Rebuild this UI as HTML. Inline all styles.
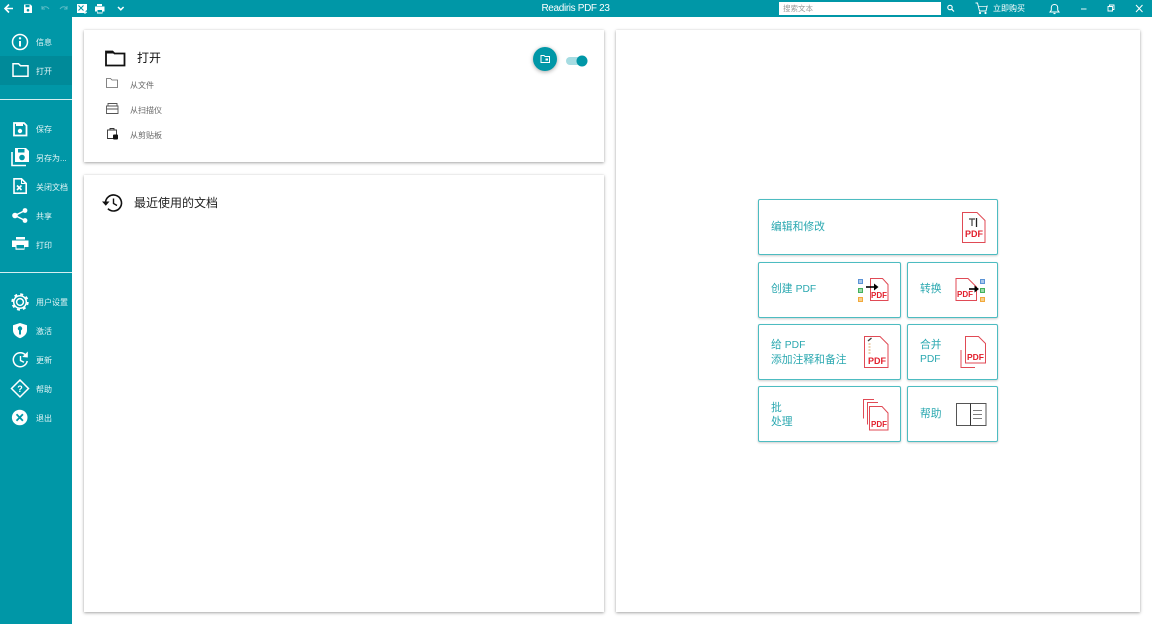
<!DOCTYPE html>
<html lang="zh">
<head>
<meta charset="utf-8">
<title>Readiris PDF 23</title>
<style>
html,body{margin:0;padding:0}
body{width:1152px;height:624px;overflow:hidden;background:#fff;position:relative;font-family:"Liberation Sans","Noto Sans CJK SC",sans-serif;color:#222}
.a{position:absolute}
.top{left:0;top:0;width:1152px;height:17px;background:#0097a7}
.side{left:0;top:17px;width:71.5px;height:607px;background:#0097a7}
.sel{left:0;top:56px;width:71.5px;height:29px;background:#008a99}
.hr{left:0;width:72px;height:1px;background:#d5eef0}
.sl{left:36px;font-size:8px;line-height:12px;color:#e4f5f6;white-space:nowrap}
.card{background:#fff;box-shadow:0 1px 3px rgba(0,0,0,.35),0 0 1px rgba(0,0,0,.1)}
.fl{left:130px;font-size:8px;line-height:12px;color:#666;white-space:nowrap}
.btn{background:#fff;border:1px solid #4dbcc1;border-radius:2px;box-shadow:0 1px 2px rgba(0,0,0,.2);box-sizing:border-box}
.bt{font-size:10.8px;line-height:14px;color:#2aa8b0;white-space:nowrap}
.bt span{font-size:10.3px}
.pdf{text-align:center;font-weight:bold;line-height:11px;color:#e21f2c}
svg{position:absolute;overflow:visible}
</style>
</head>
<body>
<div class="a top"></div>
<div class="a side"></div>
<div class="a sel"></div>
<div class="a hr" style="top:99px"></div>
<div class="a hr" style="top:272px"></div>

<!-- top toolbar icons -->
<svg style="left:0;top:0" width="130" height="17" fill="none">
<path d="M13 8.500H5.500M9 4.500L5 8.500l4 4" stroke="#fff" stroke-width="1.600"/>
<path d="M24 4.500h6.500l1.500 1.500v7h-8z" fill="#fff"/><rect x="25.500" y="5" width="4" height="2.200" fill="#0097a7"/><circle cx="28" cy="10.200" r="1.300" fill="#0097a7"/>
<path d="M42 9c1.500-3 5-3 7 0M42 6v3h3" stroke="#5cbcc6" stroke-width="1"/>
<path d="M67 9c-1.500-3-5-3-7 0M67 6v3h-3" stroke="#5cbcc6" stroke-width="1"/>
<path d="M77 4h10v6l-2 1.500v1.500h-8z" fill="#fff"/><path d="M78.500 5.500l5 5M83.500 5.500l-5 5" stroke="#0097a7" stroke-width="1"/><path d="M85 10.500v3.500M83.500 12.300h3.500" stroke="#fff" stroke-width="1"/>
<path d="M97 4h5v2h-5z" fill="#fff"/><path d="M95 6.500h9.500v5h-2v2h-5.500v-2h-2z" fill="#fff"/><rect x="97.500" y="10" width="4.500" height="2.500" fill="#0097a7"/>
<path d="M118 7l2.800 2.800L123.600 7" stroke="#fff" stroke-width="1.500"/>
</svg>
<div class="a" style="left:485.500px;top:2px;width:180px;text-align:center;font-size:10px;letter-spacing:-.35px;line-height:13px;color:#fff">Readiris PDF 23</div>
<div class="a" style="left:779px;top:2px;width:162px;height:13px;background:#fff;font-size:7.500px;line-height:14px;color:#999;text-indent:4px">搜索文本</div>
<svg style="left:945px;top:0" width="207" height="17" fill="none">
<circle cx="5" cy="7.500" r="2.200" stroke="#fff" stroke-width="1.100"/><path d="M6.800 9.300l2.200 2.200" stroke="#fff" stroke-width="1.200"/>
<path d="M30.500 3h2l2 8h6.500l1.300-5.500" stroke="#fff" stroke-width=".9"/><path d="M33.500 6.500h8.500" stroke="#fff" stroke-width=".7"/><circle cx="35" cy="13" r="1.100" fill="#fff"/><circle cx="40.500" cy="13" r="1.100" fill="#fff"/>
<path d="M105 12h9l-1.300-1.800V7.500c0-4-6.400-4-6.400 0v2.700z" stroke="#fff" stroke-width="1"/><path d="M108.500 13.500h2" stroke="#fff" stroke-width="1.200"/>
<path d="M136 9h5.500" stroke="#e8f7f8" stroke-width="1"/>
<path d="M163 6.500h4.500v4.500H163zM164.500 6.500V5h4.500v4.500h-1.500" stroke="#fff" stroke-width=".9"/>
<path d="M191 5l6.500 7M197.500 5l-6.500 7" stroke="#fff" stroke-width="1"/>
</svg>
<div class="a" style="left:993px;top:3px;font-size:8px;line-height:12px;color:#fff">立即购买</div>

<!-- sidebar icons -->
<svg style="left:0;top:17px" width="72" height="420" fill="none">
<circle cx="20" cy="25" r="7.500" stroke="#fff" stroke-width="1.500"/><rect x="19" y="24" width="2" height="5.500" fill="#fff"/><circle cx="20" cy="21.300" r="1.200" fill="#fff"/>
<path d="M13 46.700h5.500l2 2h7.500v10.500H13z" stroke="#fff" stroke-width="1.500"/>
<path d="M14 106h10l2.500 2.500v10H14z" stroke="#fff" stroke-width="1.800"/><rect x="16" y="105.500" width="7" height="3.500" fill="#fff"/><circle cx="20" cy="114" r="2.200" fill="#fff"/>
<path d="M15 131h11l3 3v11H15z" fill="#fff"/><rect x="18" y="132" width="6.500" height="3.500" fill="#0097a7"/><circle cx="22" cy="140.500" r="2.800" fill="#0097a7"/><path d="M12 135v13.500h14" stroke="#fff" stroke-width="1.600"/>
<path d="M14 161.800h7.500l4.700 4.700v9.700H14z" stroke="#fff" stroke-width="1.600"/><path d="M21.500 161.800v4.700h4.700" stroke="#fff" stroke-width="1"/><path d="M17 168.500l4.500 4.500M21.500 168.500L17 173" stroke="#fff" stroke-width="1.600"/>
<path d="M25 193.500l-10 5 10 5" stroke="#fff" stroke-width="1.500"/><circle cx="25" cy="193.500" r="2.400" fill="#fff"/><circle cx="25" cy="203.500" r="2.400" fill="#fff"/><circle cx="15" cy="198.500" r="2.800" fill="#fff"/>
<rect x="16" y="220" width="9" height="2.500" fill="#fff"/><path d="M12 223.500h16.500v6.500h-4v2.700h-9V230H12z" fill="#fff"/><rect x="16.500" y="228" width="7.500" height="3.500" fill="#0097a7"/>
<circle cx="20" cy="285" r="3.400" stroke="#fff" stroke-width="1.500"/><circle cx="20" cy="285" r="6.300" stroke="#fff" stroke-width="1.500"/><circle cx="20" cy="285" r="7.800" stroke="#fff" stroke-width="1.800" stroke-dasharray="3 3.120"/>
<path d="M20 306l7 2.300v5c0 3.800-3 6.500-7 7.900-4-1.400-7-4.100-7-7.900v-5z" fill="#fff"/><circle cx="20" cy="311.500" r="2.200" fill="#0097a7"/><rect x="19" y="312" width="2" height="5.500" fill="#0097a7"/>
<path d="M25.500 338A7 7 0 1 0 27.200 344" stroke="#fff" stroke-width="1.500"/><path d="M27.800 334.500v6l-5.600-.5z" fill="#fff"/><path d="M20.500 339v4.500l3.500 1.700" stroke="#fff" stroke-width="1.400"/>
<path d="M20 363l8.500 8.500-8.500 8.500-8.500-8.500z" stroke="#fff" stroke-width="1.500"/>
<circle cx="19.700" cy="400.500" r="7.800" fill="#fff"/><path d="M16.500 397.300l6.400 6.400M22.900 397.300l-6.400 6.400" stroke="#0097a7" stroke-width="1.800"/>
</svg>
<div class="a" style="left:14px;top:382px;width:12px;text-align:center;font-size:9px;line-height:14px;font-weight:bold;color:#fff">?</div>
<div class="a sl" style="top:37px">信息</div>
<div class="a sl" style="top:66px">打开</div>
<div class="a sl" style="top:124px">保存</div>
<div class="a sl" style="top:153px">另存为...</div>
<div class="a sl" style="top:182px">关闭文档</div>
<div class="a sl" style="top:211px">共享</div>
<div class="a sl" style="top:240px">打印</div>
<div class="a sl" style="top:297px">用户设置</div>
<div class="a sl" style="top:326px">激活</div>
<div class="a sl" style="top:355px">更新</div>
<div class="a sl" style="top:384px">帮助</div>
<div class="a sl" style="top:413px">退出</div>

<!-- cards -->
<div class="a card" style="left:84px;top:30px;width:520px;height:132px"></div>
<div class="a card" style="left:84px;top:175px;width:520px;height:437px"></div>
<div class="a card" style="left:616px;top:30px;width:524px;height:582px"></div>

<svg style="left:100px;top:45px" width="70" height="180" fill="none">
<path d="M6 6.500h6.500l2 2h10v12H6z" stroke="#111" stroke-width="1.800"/><path d="M6 6.500h6.500l2 2H6z" fill="#111"/>
<path d="M6.500 33.500h4l1.500 1.500h5.500v7.500H6.500z" stroke="#666" stroke-width=".8"/>
<path d="M6.500 61h11.500v7.500H6.500zM6.500 64h11.500M8 61v-2.500h9V61" stroke="#555" stroke-width=".9"/>
<path d="M7.500 85h9v8.500h-9zM10 85v-1.500h4V85" stroke="#333" stroke-width=".9"/><rect x="13" y="89.500" width="5" height="5" rx="1" fill="#111"/>
<path d="M5.500 158a8 8 0 1 1 2.400 5.700" stroke="#111" stroke-width="1.600"/><path d="M2 156.500h7.500l-3.700 4.300z" fill="#111"/><path d="M13.500 153.500v5l3.500 2" stroke="#111" stroke-width="1.400"/>
</svg>
<div class="a" style="left:137px;top:51px;font-size:12px;line-height:15px;color:#111">打开</div>
<div class="a fl" style="top:80px">从文件</div>
<div class="a fl" style="top:105px">从扫描仪</div>
<div class="a fl" style="top:130px">从剪贴板</div>
<div class="a" style="left:134px;top:196px;font-size:12px;line-height:15px;color:#222">最近使用的文档</div>

<!-- open button + toggle -->
<div class="a" style="left:533px;top:47px;width:24px;height:24px;border-radius:50%;background:#0097a7;box-shadow:0 1px 4px rgba(0,0,0,.35)"></div>
<svg style="left:533px;top:47px" width="60" height="24" fill="none">
<path d="M8 8.500h3l1 1h4.500v6H8z" stroke="#fff" stroke-width="1"/><rect x="12.500" y="11.500" width="2.500" height="2" fill="#fff"/>
<rect x="33" y="10" width="18" height="8" rx="4" fill="#a6dce2"/><circle cx="49" cy="14" r="5.500" fill="#0097a7"/>
</svg>

<!-- buttons -->
<div class="a btn" style="left:758px;top:199px;width:240px;height:56px"></div>
<div class="a btn" style="left:758px;top:262px;width:143px;height:56px"></div>
<div class="a btn" style="left:907px;top:262px;width:91px;height:56px"></div>
<div class="a btn" style="left:758px;top:324px;width:143px;height:56px"></div>
<div class="a btn" style="left:907px;top:324px;width:91px;height:56px"></div>
<div class="a btn" style="left:758px;top:386px;width:143px;height:56px"></div>
<div class="a btn" style="left:907px;top:386px;width:91px;height:56px"></div>
<div class="a bt" style="left:771px;top:220px">编辑和修改</div>
<div class="a bt" style="left:771px;top:282px">创建 <span>PDF</span></div>
<div class="a bt" style="left:920px;top:282px">转换</div>
<div class="a bt" style="left:771px;top:338px">给 <span>PDF</span><br>添加注释和备注</div>
<div class="a bt" style="left:920px;top:338px">合并<br><span>PDF</span></div>
<div class="a bt" style="left:771px;top:401px">批<br>处理</div>
<div class="a bt" style="left:920px;top:407px">帮助</div>

<svg style="left:0;top:0" width="1152" height="624" fill="none">
<g stroke="#e04a55" stroke-width="1">
<path d="M962.500 212.500h14.500l8 8v22h-22.500z"/>
<path d="M870.500 278.500h12l5.500 6v16h-17.500z"/>
<path d="M956 278.500h12l8.500 8.500v13.500H956z"/>
<path d="M864.500 336.500h15.500l8 8v23h-23.500z"/>
<path d="M965.500 336.500h13l7 7v19.500h-20zM961 350v17.500h14"/>
<path d="M874 399.500h-10.500v19M878 402.500h-10.500v22M869.500 406.500h12.500l6 6.500v17h-18.500z"/>
</g>
</svg>
<svg style="left:0;top:0" width="1152" height="624" fill="none">
<path d="M969 219h6M972 219v7" stroke="#444" stroke-width="1.200"/><path d="M976.500 218v9" stroke="#222" stroke-width="1.300"/>
<rect x="858.500" y="279.500" width="4" height="4" fill="#a9c8ec" stroke="#5b93d6"/><rect x="858.500" y="288.500" width="4" height="4" fill="#9bdcaa" stroke="#43b05c"/><rect x="858.500" y="297.500" width="4" height="4" fill="#f8d08d" stroke="#f2a93b"/>
<path d="M866 287h9" stroke="#000" stroke-width="1.600"/><path d="M874 283.500l4.500 3.500-4.500 3.500z" fill="#000"/>
<rect x="980.500" y="279.500" width="4" height="4" fill="#a9c8ec" stroke="#5b93d6"/><rect x="980.500" y="288.500" width="4" height="4" fill="#9bdcaa" stroke="#43b05c"/><rect x="980.500" y="297.500" width="4" height="4" fill="#f8d08d" stroke="#f2a93b"/>
<path d="M969 289h6" stroke="#000" stroke-width="1.600"/><path d="M974.500 285.500l4.500 3.500-4.500 3.500z" fill="#000"/>
<path d="M868 341l3.500-3" stroke="#444" stroke-width="1.400"/><path d="M868.500 344h2M868.500 347h2M868.500 350h2M868.500 353h2" stroke="#d9a05a" stroke-width="1"/>
<rect x="956.500" y="403.500" width="29.500" height="22" stroke="#555" stroke-width="1"/><path d="M970.500 403.500v22" stroke="#333" stroke-width="1"/><path d="M973 410.500h9M973 414.500h9M973 418.500h9" stroke="#555" stroke-width=".8"/>
</svg>
<div class="a pdf" style="left:964px;top:229px;width:20px;font-size:9px">PDF</div>
<div class="a pdf" style="left:869px;top:290px;width:20px;font-size:8px">PDF</div>
<div class="a pdf" style="left:955px;top:289px;width:20px;font-size:8px">PDF</div>
<div class="a pdf" style="left:866px;top:356px;width:22px;font-size:9px">PDF</div>
<div class="a pdf" style="left:965.500px;top:352px;width:20px;font-size:8.500px">PDF</div>
<div class="a pdf" style="left:869px;top:419px;width:20px;font-size:8px">PDF</div>
</body>
</html>
